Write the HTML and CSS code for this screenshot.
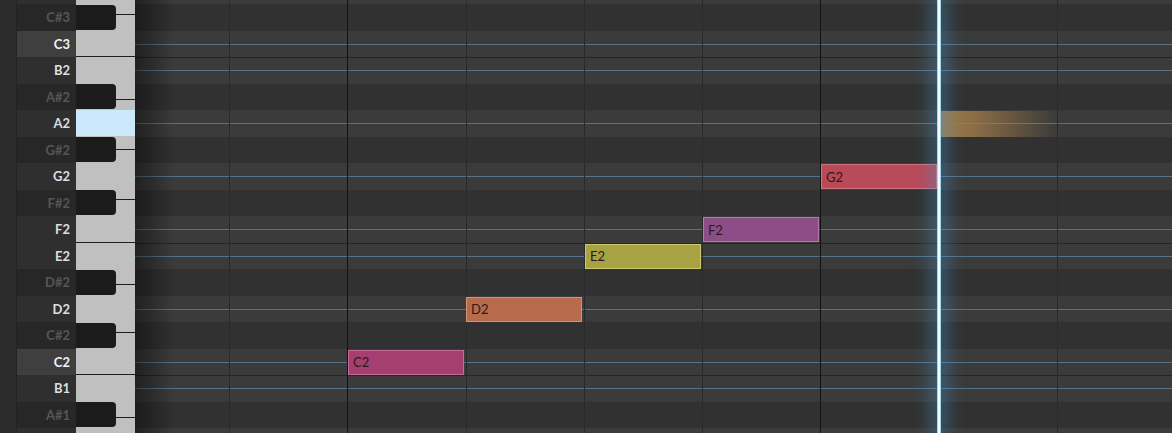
FILE: index.html
```html
<!DOCTYPE html>
<html lang="en">

<head>
    <meta charset="UTF-8">
    <title>Piano Roll</title>
    <link rel="stylesheet" href="styles.css">
</head>

<body>
    <div class="roll">
        <div class="edge"></div>

        <div class="labels">
            <div class="label"></div>
            <div class="label b">C#3</div>
            <div class="label c">C3</div>
            <div class="label">B2</div>
            <div class="label b">A#2</div>
            <div class="label">A2</div>
            <div class="label b">G#2</div>
            <div class="label">G2</div>
            <div class="label b">F#2</div>
            <div class="label">F2</div>
            <div class="label">E2</div>
            <div class="label b">D#2</div>
            <div class="label">D2</div>
            <div class="label b">C#2</div>
            <div class="label c">C2</div>
            <div class="label">B1</div>
            <div class="label b">A#1</div>
            <div class="label"></div>
        </div>

        <div class="keys">
            <div class="white k-d3"></div>
            <div class="white k-c"></div>
            <div class="white k-b"></div>
            <div class="white k-a"></div>
            <div class="white k-g"></div>
            <div class="white k-f"></div>
            <div class="white k-e"></div>
            <div class="white k-d"></div>
            <div class="white k-c"></div>
            <div class="white k-b"></div>
            <div class="white k-a"></div>

            <div class="hl"></div>
            <div class="black bk-cs3"></div>
            <div class="black bk-as2"></div>
            <div class="black bk-gs2"></div>
            <div class="black bk-fs2"></div>
            <div class="black bk-ds2"></div>
            <div class="black bk-cs2"></div>
            <div class="black bk-as1"></div>
        </div>

        <div class="grid">
            <div class="rows">
                <div class="row w"></div>
                <div class="row"></div>
                <div class="row w"></div>
                <div class="row w sep"></div>
                <div class="row"></div>
                <div class="row w"></div>
                <div class="row"></div>
                <div class="row w"></div>
                <div class="row"></div>
                <div class="row w"></div>
                <div class="row w sep"></div>
                <div class="row"></div>
                <div class="row w"></div>
                <div class="row"></div>
                <div class="row w"></div>
                <div class="row w sep"></div>
                <div class="row"></div>
                <div class="row w"></div>
            </div>

            <div class="beats">
                <div class="beat"></div>
                <div class="beat bar"></div>
                <div class="beat"></div>
                <div class="beat"></div>
                <div class="beat"></div>
                <div class="beat bar"></div>
                <div class="beat"></div>
                <div class="beat"></div>
            </div>

            <div class="shade"></div>

            <div class="note n-c2">C2</div>
            <div class="note n-d2">D2</div>
            <div class="note n-e2">E2</div>
            <div class="note n-f2">F2</div>
            <div class="note n-g2">G2</div>

            <div class="ghost"></div>
            <div class="playhead"></div>
        </div>
    </div>
</body>

</html>
```

FILE: styles.css
```css
* {
    margin: 0;
    padding: 0;
    box-sizing: border-box;
}

body {
    background-color: #2b2b2b;
    font-family: Lato, "Liberation Sans", sans-serif;
    overflow: hidden;
}

.roll {
    display: flex;
    height: 433px;
    overflow: hidden;
}

.edge {
    width: 17px;
    flex-shrink: 0;
    background-color: #2c2c2c;
    border-right: 1px solid #232323;
}

/* note names */
.labels {
    width: 59px;
    flex-shrink: 0;
    display: flex;
    flex-direction: column;
    margin-top: -22.5px;
}

.label {
    height: 26.5px;
    flex-shrink: 0;
    display: flex;
    align-items: center;
    justify-content: flex-end;
    padding-right: 6px;
    font-size: 13px;
    font-weight: 700;
    color: #dedede;
    background-color: #2f2f2f;
}

.label.b {
    background-color: #272727;
    color: #565656;
}

.label.c {
    background-color: #3f3f3f;
    color: #f2f2f2;
}

/* keyboard */
.keys {
    width: 59px;
    flex-shrink: 0;
    position: relative;
    display: flex;
    flex-direction: column;
    background-color: #c0c0c0;
}

.white {
    flex-shrink: 0;
    border-bottom: 1px solid #1f1f1f;
}

.k-d3 { height: 15px; }
.k-c { height: 42px; }
.k-b { height: 43px; }
.k-a { height: 50px; }
.k-g { height: 50px; }
.k-f { height: 42.5px; }
.k-e { height: 42.5px; }
.k-d { height: 48px; }

.hl {
    position: absolute;
    left: 0;
    right: 0;
    top: 110px;
    height: 26px;
    background-color: #cce9fb;
}

.black {
    position: absolute;
    left: 0;
    width: 40px;
    height: 25px;
    background-color: #1b1b1b;
    border-radius: 0 4px 4px 0;
}

.bk-cs3 { top: 4.5px; }
.bk-as2 { top: 84px; }
.bk-gs2 { top: 137px; }
.bk-fs2 { top: 190px; }
.bk-ds2 { top: 269.5px; }
.bk-cs2 { top: 322.5px; }
.bk-as1 { top: 402px; }

/* grid */
.grid {
    flex: 1;
    position: relative;
    overflow: hidden;
}

.rows {
    display: flex;
    flex-direction: column;
    margin-top: -22.5px;
}

.row {
    height: 26.5px;
    flex-shrink: 0;
    background-color: #313131;
}

.row.w {
    background: linear-gradient(#3b3b3b 13px, #55738a 13px, #55738a 14px, #3b3b3b 14px);
}

.row.sep {
    box-shadow: inset 0 1px #252525;
}

.beats {
    position: absolute;
    inset: 0;
    display: flex;
    padding-left: 94px;
}

.beat {
    width: 118.3px;
    flex-shrink: 0;
    border-left: 1px solid #2a2a2a;
}

.beat.bar {
    border-left-color: #121212;
}

.shade {
    position: absolute;
    top: 0;
    bottom: 0;
    left: 0;
    width: 40px;
    background: linear-gradient(to right, rgba(0, 0, 0, 0.45), rgba(0, 0, 0, 0));
}

.note {
    position: absolute;
    width: 116px;
    height: 25px;
    padding-left: 4px;
    display: flex;
    align-items: center;
    font-size: 13px;
    color: #2a1a1f;
    border: 1px solid;
}

.n-c2 { left: 213px; top: 349.5px; background-color: #a43f70; border-color: #c56c98; }
.n-d2 { left: 331px; top: 296.5px; background-color: #b86a4c; border-color: #d9926f; }
.n-e2 { left: 450px; top: 243.5px; background-color: #a7a343; border-color: #cbc86e; }
.n-f2 { left: 568px; top: 217px; background-color: #8d4e88; border-color: #b07bab; }
.n-g2 { left: 686px; top: 164px; background-color: #b94a58; border-color: #d27480; }

.ghost {
    position: absolute;
    left: 805px;
    top: 110.5px;
    width: 116px;
    height: 26px;
    background: linear-gradient(to right, rgba(166, 126, 74, 0.95), rgba(166, 126, 74, 0.75) 30%, rgba(166, 126, 74, 0));
}

.playhead {
    position: absolute;
    top: 0;
    bottom: 0;
    left: 802px;
    width: 4px;
    background: linear-gradient(to right, #74c2ea, #f2fbff 35%, #f2fbff 65%, #74c2ea);
    box-shadow: 0 0 18px 6px rgba(70, 150, 205, 0.45);
}
```
